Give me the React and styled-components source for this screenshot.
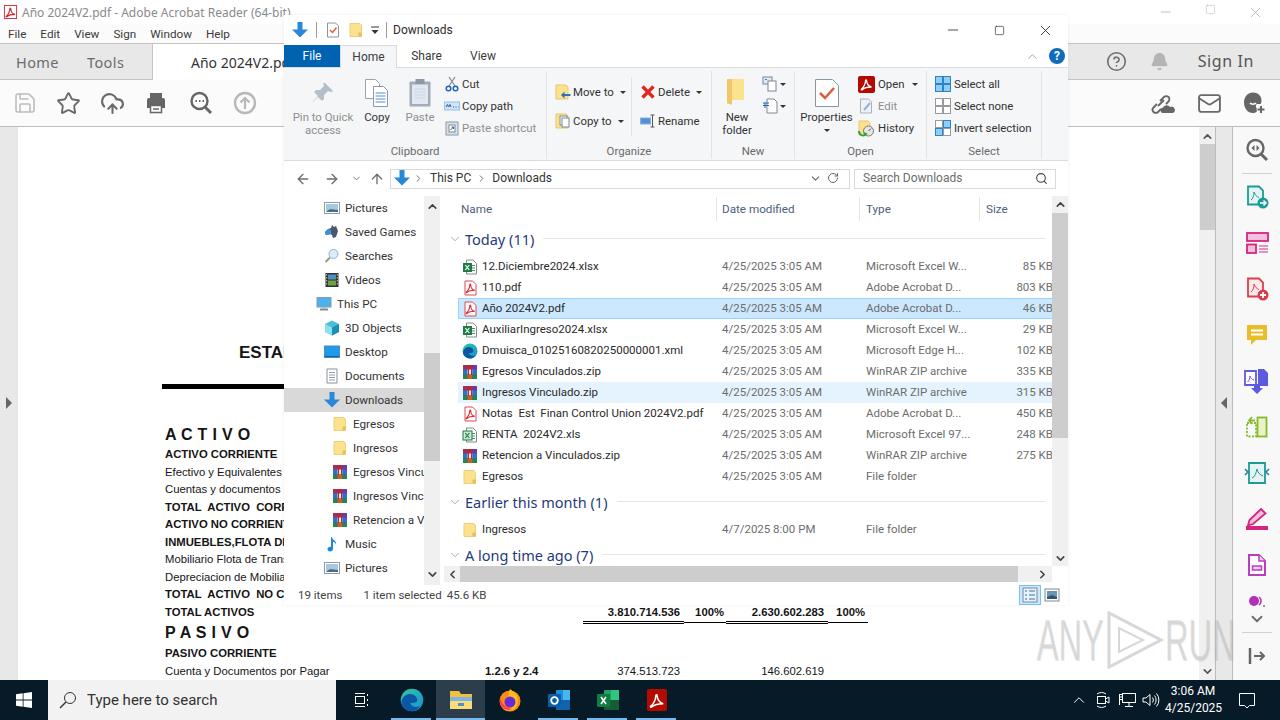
import React from "react";
import styled, { createGlobalStyle } from "styled-components";
import {
  ArrowLeft,
  ArrowRight,
  ArrowUp,
  Bell,
  ChevronDown,
  ChevronLeft,
  ChevronRight,
  ChevronUp,
  CircleHelp,
  CloudUpload,
  Mail,
  Minus,
  RotateCw,
  Save,
  Search,
  Square,
  Star,
  X,
} from "lucide-react";

const UI_FONT = `Roboto, "Noto Sans", sans-serif`;
const NOTO = `"Noto Sans", "Open Sans", sans-serif`;
const DOC_FONT = `"Liberation Sans", Arial, sans-serif`;

const GlobalStyle = createGlobalStyle`
  html, body { margin: 0; padding: 0; background: #fff; }
  body { font-family: ${UI_FONT}; overflow: hidden; }
  * { box-sizing: border-box; }
`;

const Screen = styled.div`
  position: relative;
  width: 1280px;
  height: 720px;
  overflow: hidden;
  display: flex;
  flex-direction: column;
`;

const Gap = styled.span`
  width: ${(p) => p.$w}px;
  flex: none;
`;

/* ---------- acrobat window ---------- */

const Acrobat = styled.div`
  flex: 1;
  min-height: 0;
  display: flex;
  flex-direction: column;
  background: #fff;
`;

const AcroTitle = styled.div`
  height: 24px;
  display: flex;
  align-items: center;
  padding-left: 3px;
  gap: 4px;
  font-family: ${NOTO};
  font-size: 12px;
  color: #8a8a8a;
  background: #fff;
`;

const AcroWinButtons = styled.div`
  margin-left: auto;
  display: flex;
  color: #a8a8a8;
  padding-right: 2px;
  span {
    width: 45px;
    display: flex;
    justify-content: center;
  }
`;

const AcroMenu = styled.div`
  height: 19px;
  display: flex;
  align-items: center;
  padding-left: 8px;
  gap: 14px;
  font-size: 11.7px;
  color: #3a3a3a;
  background: #fbfbfb;
`;

const AcroTabs = styled.div`
  height: 37px;
  display: flex;
  align-items: center;
  background: #e8e8e8;
  border-top: 1px solid #c4c4c4;
  border-bottom: 1px solid #c4c4c4;
`;

const HomeTab = styled.div`
  width: 71px;
  padding-left: 16px;
  font-family: ${NOTO};
  font-size: 14.5px;
  letter-spacing: 0.4px;
  color: #6c6c6c;
`;

const DocTab = styled.div`
  flex: 0 0 700px;
  margin-left: 10px;
  height: 36px;
  margin-bottom: -1px;
  display: flex;
  align-items: center;
  padding-left: 38px;
  background: #fff;
  border-left: 1px solid #c4c4c4;
  font-family: ${NOTO};
  font-size: 14px;
  color: #333;
  white-space: nowrap;
`;

const TabTools = styled.div`
  margin-left: auto;
  display: flex;
  align-items: center;
  color: #6e6e6e;
  padding-right: 26px;
  gap: 21px;
  svg:nth-child(2) {
    margin-left: 2px;
  }
`;

const SignIn = styled.span`
  font-family: ${NOTO};
  font-size: 16px;
  letter-spacing: 0.6px;
  color: #555;
  margin: -2px 0 0 8px;
`;

const AcroToolbar = styled.div`
  height: 47px;
  display: flex;
  align-items: center;
  padding-left: 13px;
  gap: 19px;
  background: #fbfbfb;
  border-bottom: 1px solid #bdbdbd;
  color: #6a6a6a;
  > :nth-child(5) {
    margin-left: 2px;
  }
  > :nth-child(6) {
    margin-left: 1px;
  }
`;

const ToolbarEnd = styled.div`
  margin-left: auto;
  display: flex;
  align-items: center;
  gap: 20px;
  padding-right: 14px;
  svg:first-child {
    margin-right: 2px;
  }
`;

const AcroBody = styled.div`
  flex: 1;
  min-height: 0;
  display: flex;
`;

const SidePane = styled.div`
  width: ${(p) => p.$w}px;
  flex: none;
  display: flex;
  align-items: center;
  justify-content: center;
  padding-bottom: 2px;
  background: #e8e8e8;
  ${(p) => p.$lined && "border-left: 1px solid #bcbcbc; border-right: 1px solid #bcbcbc;"}
`;

const PaneArrow = styled.i`
  width: 0;
  height: 0;
  border-top: 6px solid transparent;
  border-bottom: 6px solid transparent;
  ${(p) => (p.$left ? "border-right: 6px solid #666;" : "border-left: 6px solid #666;")}
`;

const Page = styled.div`
  flex: 1;
  min-width: 0;
  overflow: hidden;
  background: #fff;
  padding: 216px 0 0 147px;
  font-family: ${DOC_FONT};
  color: #151515;
`;

const DocTitle = styled.div`
  height: 20px;
  margin-left: 74px;
  font-size: 17px;
  font-weight: 700;
  line-height: 20px;
  white-space: nowrap;
`;

const DocRule = styled.div`
  width: 706px;
  height: 5px;
  margin: 21px 0 35px -3px;
  background: #000;
`;

const Heading = styled.div`
  height: ${(p) => p.$h}px;
  line-height: ${(p) => p.$h}px;
  font-size: 16px;
  font-weight: 700;
  letter-spacing: 0.3px;
  white-space: pre;
`;

const DocRow = styled.div`
  height: 17.5px;
  display: grid;
  grid-template-columns: 315px 103px 101px 42px 102px 40px;
  grid-template-rows: 17.5px;
  align-items: start;
  font-size: 11.3px;
  line-height: 17.5px;
  font-weight: ${(p) => (p.$bold ? 700 : 400)};
  white-space: pre;
`;

const NoteCell = styled.div`
  font-weight: 700;
  padding-left: 5px;
`;

const Num = styled.div`
  text-align: right;
  padding-right: ${(p) => p.$pr || 4}px;
  ${(p) => p.$under === "double" && "height: 20px; border-bottom: 3px double #000;"}
  ${(p) => p.$under === "single" && "height: 19px; border-bottom: 1px solid #000;"}
`;

const DocScroll = styled.div`
  width: 16px;
  flex: none;
  display: flex;
  flex-direction: column;
  align-items: center;
  background: #f0f0f0;
  color: #555;
`;

const DocThumb = styled.div`
  width: 15px;
  height: 86px;
  background: #cdcdcd;
`;

const DocUp = styled(ChevronUp)`
  margin: 3px 0 1px;
`;

const DocDown = styled(ChevronDown)`
  margin: auto 0 2px;
`;

const ToolStrip = styled.div`
  width: 47px;
  flex: none;
  display: flex;
  flex-direction: column;
  align-items: center;
  padding-top: 11px;
  background: #f8f8f8;
  color: #6a6a6a;
`;

const StripRule = styled.div`
  width: 30px;
  height: 1px;
  flex: none;
  background: #d0d0d0;
  margin: ${(p) => p.$m};
`;

const StripTool = styled.div`
  height: ${(p) => p.$h || 46}px;
  flex: none;
  display: flex;
  align-items: center;
  justify-content: center;
`;

const StripMore = styled(ChevronDown)`
  flex: none;
  margin-top: -6px;
`;

/* ---------- explorer window ---------- */

const Explorer = styled.div`
  position: absolute;
  left: 284px;
  top: 15px;
  width: 784px;
  height: 590px;
  display: flex;
  flex-direction: column;
  background: #fff;
  box-shadow: 0 0 3px rgba(0, 0, 0, 0.08);
  font-size: 12px;
  color: #2c2c2c;
`;

const TitleBar = styled.div`
  height: 30px;
  flex: none;
  display: flex;
  align-items: center;
  padding-left: 8px;
`;

const TitleSep = styled.i`
  width: 1px;
  height: 16px;
  background: #9a9a9a;
  margin: 0 ${(p) => p.$m || 8}px;
`;

const WinButtons = styled.div`
  margin-left: auto;
  display: flex;
  color: #222;
`;

const WinButton = styled.div`
  width: 46px;
  display: flex;
  justify-content: center;
  align-items: center;
`;

const TabRow = styled.div`
  height: 23px;
  flex: none;
  display: flex;
  align-items: stretch;
  border-bottom: 1px solid #dadbdc;
`;

const FileTab = styled.div`
  width: 56px;
  display: flex;
  align-items: center;
  justify-content: center;
  background: #0063b1;
  color: #fff;
`;

const RibbonTab = styled.div`
  width: ${(p) => p.$w}px;
  display: flex;
  align-items: center;
  justify-content: center;
  color: #3a3a3a;
  ${(p) =>
    p.$active &&
    `background: #f5f6f7;
     border: 1px solid #dadbdc;
     border-bottom: none;
     margin-bottom: -1px;`}
`;

const TabEnd = styled.div`
  margin-left: auto;
  display: flex;
  align-items: center;
  gap: 9px;
  padding-right: 3px;
  color: #a9a9a9;
`;

const HelpDot = styled.div`
  width: 16px;
  height: 16px;
  border-radius: 50%;
  background: #0f6cbd;
  color: #fff;
  font-size: 12px;
  font-weight: 700;
  line-height: 16px;
  text-align: center;
`;

const Ribbon = styled.div`
  height: 93px;
  flex: none;
  display: flex;
  background: #f5f6f7;
  border-bottom: 1px solid #dadbdc;
  font-size: 11.4px;
`;

const Group = styled.div`
  width: ${(p) => p.$w}px;
  flex: none;
  display: flex;
  flex-direction: column;
  border-right: 1px solid #e2e3e4;
  margin: 3px 0 1px;
`;

const GroupBody = styled.div`
  height: 72px;
  flex: none;
  display: flex;
  padding-left: ${(p) => p.$pl || 0}px;
`;

const GroupLabel = styled.div`
  height: 16px;
  flex: none;
  line-height: 16px;
  text-align: center;
  color: #6a6a6a;
`;

const LargeButton = styled.div`
  width: ${(p) => p.$w}px;
  flex: none;
  display: flex;
  flex-direction: column;
  align-items: center;
  padding-top: 7px;
  line-height: 13px;
  text-align: center;
  color: ${(p) => (p.$off ? "#8f8f8f" : "#333")};
  svg {
    margin-bottom: 3px;
    flex: none;
  }
`;

const SmallStack = styled.div`
  flex: none;
  display: flex;
  flex-direction: column;
  padding-top: 2px;
`;

const TallStack = styled.div`
  width: ${(p) => (p.$w ? `${p.$w}px` : "auto")};
  height: 59px;
  margin-top: 6px;
  flex: none;
  display: flex;
  flex-direction: column;
  ${(p) => p.$lined && "border-right: 1px solid #e2e3e4; margin-right: 8px;"}
`;

const SmallButton = styled.div`
  height: ${(p) => p.$h || 22}px;
  display: flex;
  align-items: center;
  gap: ${(p) => p.$gap || 3}px;
  white-space: nowrap;
  color: ${(p) => (p.$off ? "#8f8f8f" : "#333")};
  svg {
    flex: none;
  }
`;

const IconSlot = styled.span`
  width: 17px;
  display: flex;
  flex: none;
`;

const Caret = styled.i`
  width: 0;
  height: 0;
  margin: ${(p) => p.$mt ?? 1}px 0 0 ${(p) => p.$m ?? 4}px;
  border-left: 3px solid transparent;
  border-right: 3px solid transparent;
  border-top: 3px solid #333;
`;

const AddressRow = styled.div`
  height: 35px;
  flex: none;
  display: flex;
  align-items: center;
  padding-left: 7px;
  color: #6d6d6d;
`;

const NavButton = styled.div`
  width: ${(p) => p.$w}px;
  margin-right: ${(p) => p.$mr || 0}px;
  display: flex;
  justify-content: center;
`;

const AddressBox = styled.div`
  width: 460px;
  height: 20px;
  display: flex;
  align-items: center;
  padding: 0 0 1px 3px;
  border: 1px solid #d9d9d9;
  color: #333;
`;

const CrumbArrow = styled(ChevronRight)`
  margin: 0 ${(p) => p.$r}px 0 ${(p) => p.$l}px;
  color: #666;
  flex: none;
`;

const AddressEnd = styled.div`
  margin-left: auto;
  display: flex;
  align-items: center;
  gap: 5px;
  padding-right: 10px;
  color: #666;
`;

const SearchBox = styled.div`
  width: 202px;
  height: 20px;
  margin-left: 4px;
  display: flex;
  align-items: center;
  justify-content: space-between;
  padding: 0 7px 1px 8px;
  border: 1px solid #d9d9d9;
  color: #6d6d6d;
`;

const MainArea = styled.div`
  flex: 1;
  min-height: 0;
  display: flex;
`;

const NavPane = styled.div`
  width: 140px;
  flex: none;
  overflow: hidden;
`;

const NavRow = styled.div`
  height: 24px;
  display: flex;
  align-items: center;
  gap: 5px;
  padding-left: ${(p) => p.$pl}px;
  font-size: 11.7px;
  white-space: nowrap;
  color: #333;
  background: ${(p) => (p.$active ? "#d9d9d9" : "transparent")};
  svg {
    flex: none;
  }
`;

const ScrollBar = styled.div`
  width: 16px;
  flex: none;
  display: flex;
  flex-direction: column;
  justify-content: space-between;
  align-items: center;
  padding: ${(p) => p.$top}px 0 ${(p) => p.$bottom}px;
  position: relative;
  background: #f0f0f0;
  color: #444;
`;

const ScrollThumb = styled.div`
  position: absolute;
  left: 0;
  width: 16px;
  top: ${(p) => p.$top}px;
  height: ${(p) => p.$h}px;
  background: #cdcdcd;
`;

const FilePane = styled.div`
  flex: 1;
  min-width: 0;
  display: grid;
  grid-template-columns: 612px 16px;
  grid-template-rows: 370px 16px 3px;
`;

const FileList = styled.div`
  overflow: hidden;
  padding-left: 18px;
`;

const ColumnHeader = styled.div`
  height: 24px;
  display: grid;
  grid-template-columns: 258px 143px 120px 73px;
  margin-bottom: 8px;
  font-size: 11.7px;
`;

const ColumnCell = styled.div`
  padding-left: ${(p) => p.$pl || 5}px;
  margin-top: 1px;
  line-height: 24px;
  color: #4c607a;
  ${(p) => !p.$first && "border-left: 1px solid #e5e5e5;"}
`;

const GroupHead = styled.div`
  height: 24px;
  margin: ${(p) => p.$mt || 0}px 0 4px -10px;
  display: flex;
  align-items: center;
  padding-bottom: 3px;
  font-family: ${NOTO};
  font-size: 14.5px;
  color: #1f3a7d;
  white-space: nowrap;
  gap: 3px;
  &::after {
    content: "";
    flex: 1;
    height: 1px;
    background: #e5e5e5;
    margin: 0 7px 0 6px;
  }
  svg {
    color: #8a9ab0;
    flex: none;
  }
`;

const FileRow = styled.div`
  height: 21px;
  display: grid;
  grid-template-columns: 264px 144px 100px 86px;
  align-items: center;
  font-size: 11.5px;
  line-height: 19px;
  white-space: pre;
  border: 1px solid ${(p) => (p.$sel ? "#99d1ff" : "transparent")};
  background: ${(p) => (p.$sel ? "#cce8ff" : p.$hot ? "#e5f3ff" : "transparent")};
  margin-right: -1px;
`;

const NameCell = styled.div`
  display: flex;
  align-items: center;
  gap: 4px;
  padding-left: 3px;
  color: #2a2a2a;
  overflow: hidden;
`;

const InfoCell = styled.div`
  color: #6d6d6d;
  margin-left: -1px;
  text-align: ${(p) => (p.$right ? "right" : "left")};
`;

const HScroll = styled.div`
  margin-left: 4px;
  display: flex;
  align-items: center;
  justify-content: space-between;
  background: #f0f0f0;
  color: #444;
  position: relative;
  padding: 0 3px 0 2px;
`;

const HThumb = styled.div`
  position: absolute;
  left: 16px;
  top: 0;
  bottom: 0;
  width: 558px;
  background: #cdcdcd;
`;

const StatusBar = styled.div`
  height: 20px;
  flex: none;
  display: flex;
  align-items: center;
  padding-left: 14px;
  font-size: 11.5px;
  color: #444;
  white-space: nowrap;
`;

const StatusItem = styled.span`
  margin-right: ${(p) => p.$mr}px;
`;

const ViewButtons = styled.div`
  margin-left: auto;
  display: flex;
  align-items: center;
  padding-right: 5px;
`;

const ViewButton = styled.div`
  width: 22px;
  height: 20px;
  display: flex;
  align-items: center;
  justify-content: center;
  ${(p) => p.$on && "background: #cce8ff; border: 1px solid #7ac1f0;"}
`;

/* ---------- taskbar ---------- */

const Taskbar = styled.div`
  height: 40px;
  flex: none;
  display: flex;
  align-items: stretch;
  background: #071a28;
  color: #fff;
`;

const StartButton = styled.div`
  width: 48px;
  display: flex;
  align-items: center;
  justify-content: center;
`;

const SearchField = styled.div`
  width: 288px;
  display: flex;
  align-items: center;
  gap: 10px;
  padding-left: 11px;
  background: #f2f2f2;
  color: #333;
  font-size: 15px;
`;

const TaskButton = styled.div`
  width: 49px;
  display: flex;
  align-items: center;
  justify-content: center;
  position: relative;
  background: ${(p) => (p.$active ? "#2c3d4b" : "transparent")};
  ${(p) =>
    p.$open &&
    `&::after {
      content: "";
      position: absolute;
      bottom: 0;
      height: 2px;
      left: ${p.$active ? 0 : 4}px;
      right: ${p.$active ? 0 : 5}px;
      background: #76b9ed;
    }`}
`;

const Tray = styled.div`
  margin-left: auto;
  display: flex;
  align-items: center;
  padding-right: 21px;
`;

const TrayIcon = styled.div`
  width: 24px;
  display: flex;
  justify-content: center;
`;

const Clock = styled.div`
  width: 56px;
  margin: 0 14px 0 2px;
  text-align: center;
  font-size: 12px;
  line-height: 17px;
`;

const Watermark = styled.div`
  position: absolute;
  left: 1036px;
  top: 608px;
  width: 198px;
  height: 64px;
  display: flex;
  align-items: center;
  justify-content: space-between;
  color: rgba(190, 190, 190, 0.38);
  font-family: ${DOC_FONT};
  font-size: 44px;
  text-shadow: 1px 1px 0 rgba(150, 150, 150, 0.22);
  pointer-events: none;
`;

const MarkText = styled.span`
  width: 68px;
  display: flex;
  justify-content: center;
  transform: scale(0.74, 1.3);
`;

/* ---------- icons ---------- */

const Svg = ({ s = 16, w, h, vb, children }) => (
  <svg width={w || s} height={h || s} viewBox={vb || `0 0 ${s} ${s}`}>
    {children}
  </svg>
);

const Squiggle = ({ color = "#dc2a30", k = 1, x = 0, y = 0, sw = 1.3 }) => (
  <path
    transform={`translate(${x} ${y}) scale(${k})`}
    d="M1 10.500C3 9.500 5 5 5 2.500 5 1 6.200 1 6.200 2.500 6.200 5 8 8 11 8.500 8.500 8.500 4 9 2 11 1 12 .5 11 1 10.500Z"
    fill="none"
    stroke={color}
    strokeWidth={sw}
  />
);

const PdfIcon = () => (
  <Svg>
    <path d="M3 1h7.500L14 4.500V15H3Z" fill="#fff" stroke="#e0474c" />
    <Squiggle x={3.500} y={3} k={0.85} />
  </Svg>
);

const ExcelIcon = ({ old }) => (
  <Svg>
    <path d="M4.500 1H11l3.500 3.500V15h-10Z" fill="#fff" stroke="#7f8c87" />
    <path d="M10 6.500h3M10 9h3M10 11.500h3" stroke="#4d8f6c" />
    <rect x="1" y="4" width="9" height="9" fill={old ? "#c9e9d3" : "#1d7c45"} stroke={old ? "#1d7c45" : "none"} />
    <path d="M3.300 6l4 5M7.300 6l-4 5" stroke={old ? "#1d7c45" : "#fff"} strokeWidth="1.200" />
  </Svg>
);

const RarIcon = () => (
  <Svg>
    <rect x="1" y="1" width="14" height="14" fill="#5b3a9c" />
    <rect x="1" y="1" width="4.500" height="4.500" fill="#a5304f" />
    <rect x="5.500" y="1" width="5" height="4.500" fill="#b5293f" />
    <rect x="10.500" y="1" width="4.500" height="4.500" fill="#6d3aa5" />
    <rect x="1" y="5.500" width="4.500" height="5" fill="#2f6fd0" />
    <rect x="5.500" y="5.500" width="5" height="5" fill="#f4ead0" />
    <rect x="10.500" y="5.500" width="4.500" height="5" fill="#2f6fd0" />
    <rect x="1" y="10.500" width="4.500" height="4.500" fill="#1e8a4a" />
    <rect x="5.500" y="10.500" width="5" height="4.500" fill="#cf5b2b" />
    <rect x="10.500" y="10.500" width="4.500" height="4.500" fill="#1e8a4a" />
    <path d="M6.500 5v6M9.500 5v6" stroke="#b5293f" strokeWidth="1" />
  </Svg>
);

const EdgeIcon = ({ s = 16 }) => (
  <svg width={s} height={s} viewBox="0 0 16 16">
    <defs>
      <linearGradient id="edgeG" x1="0" y1="0" x2="1" y2="1">
        <stop offset="0" stopColor="#2ecb9b" />
        <stop offset="1" stopColor="#1a8fd8" />
      </linearGradient>
    </defs>
    <circle cx="8" cy="8" r="7.500" fill="url(#edgeG)" />
    <path d="M1 9c.5-3 3-5 5.500-5 3 0 5 2 5 4.200 0 1.200-1.500 1.800-3 1.800-1 0-1.500-.3-1.500-.3 0 2 2 3 4 3 1 0 2-.4 2.500-.8C12 14.500 10 15.500 8 15.500 4 15.500 1 12.500 1 9Z" fill="#0c57a5" />
  </svg>
);

const FolderIcon = ({ s = 16 }) => (
  <svg width={s} height={s} viewBox="0 0 16 16">
    <path d="M2 1.500h10l1.500 2v11H2Z" fill="#fde28e" stroke="#eccf7c" />
    <path d="M10.500 14.500v-4h3v4Z" fill="#e9bd55" />
  </svg>
);

const DownArrowIcon = ({ s = 16 }) => (
  <svg width={s} height={s} viewBox="0 0 16 16">
    <path d="M5.500 0h5v7.500H16L8 15.500 0 7.500h5.500Z" fill="#2b87d8" />
  </svg>
);

const PicturesIcon = () => (
  <Svg>
    <rect x=".5" y="2.500" width="15" height="11" fill="#fff" stroke="#8a9aa8" />
    <rect x="2" y="4" width="12" height="8" fill="#a9c7dc" />
    <path d="M2 12l4-3 8 1v2Z" fill="#4a6d84" />
  </Svg>
);

const GamesIcon = () => (
  <Svg>
    <path d="M8 1l2 2 2-1 2 5-2 6-3 1-1-3-2-1-4 1-1-3 3-3 3-1Z" fill="#4a5a6a" />
    <path d="M1 8l3-3 3 1v4l-3 1-3-1Z" fill="#3f90dc" />
  </Svg>
);

const SearchesIcon = () => (
  <Svg>
    <circle cx="9.500" cy="6" r="4.500" fill="#dcecf8" stroke="#8fb2cc" />
    <path d="M6 9.500L1.500 14" stroke="#9a9a8a" strokeWidth="2" />
  </Svg>
);

const VideosIcon = () => (
  <Svg>
    <rect x="1.500" y="1" width="13" height="14" fill="#2e3136" />
    <rect x="4" y="2.500" width="8" height="5" fill="#4f8fc0" />
    <rect x="4" y="8.500" width="8" height="5" fill="#6fa13f" />
    <path d="M2.700 2v12M13.300 2v12" stroke="#d8c58a" strokeDasharray="1.500 1.500" />
  </Svg>
);

const PcIcon = () => (
  <Svg>
    <rect x="1" y="1.500" width="14" height="9.500" fill="#4cb1ee" stroke="#8a9aa8" />
    <path d="M4 13.500h8" stroke="#7a8a98" strokeWidth="2" />
    <path d="M6 11h4v2H6Z" fill="#b0bcc6" />
  </Svg>
);

const ObjectsIcon = () => (
  <Svg>
    <path d="M8 .5l7 3.500v8l-7 3.500-7-3.500V4Z" fill="#49c0d8" />
    <path d="M8 7.500l7-3.500v8l-7 3.500Z" fill="#1a90b4" />
    <path d="M8 7.500L1 4v8l7 3.500Z" fill="#8de0ea" />
  </Svg>
);

const DesktopIcon = () => (
  <Svg>
    <rect x=".5" y="2" width="15" height="11.500" fill="#1f9ae8" stroke="#4d8cba" />
    <path d="M1 12.500h14" stroke="#0e5f9c" />
  </Svg>
);

const DocumentsIcon = () => (
  <Svg>
    <path d="M3 1h10v14H3Z" fill="#fff" stroke="#8a8f98" />
    <path d="M5 4.500h6M5 7h6M5 9.500h6M5 12h6" stroke="#8ca0b8" />
  </Svg>
);

const MusicIcon = () => (
  <Svg>
    <path d="M8 1c0 3 5 3.500 4 7.500-.5-2-2-2.500-3-2.700V13c0 1.500-1.500 2.500-3 2.500S3.500 14.500 3.500 13 5 10.500 7 10.800V1Z" fill="#1e88d8" />
  </Svg>
);

const PinIcon = () => (
  <svg width="26" height="30" viewBox="0 -2 26 30">
    <path d="M15 3l8 8-2 1-3-1-4 4 0 4-2 2-4-4-6 6 6-7-4-4 2-2 4 0 4-4-1-3Z" fill="#b4bfc9" />
  </svg>
);

const CopyLarge = () => (
  <svg width="26" height="30" viewBox="0 0 26 30">
    <path d="M1.500 1.500h10l4 4v15h-14Z" fill="#fff" stroke="#9aa3ad" />
    <path d="M9.500 8.500h10l4 4v16h-14Z" fill="#fff" stroke="#8c99a8" />
    <path d="M11.500 15h10M11.500 18h10M11.500 21h10M11.500 24h10" stroke="#4f8fd4" />
  </svg>
);

const PasteLarge = () => (
  <svg width="24" height="30" viewBox="0 0 24 30">
    <rect x="1.500" y="3.500" width="21" height="25" rx="1" fill="#a3acb7" />
    <rect x="4" y="6.500" width="16" height="19.500" fill="#dfe8f3" />
    <rect x="7.500" y="1" width="9" height="5" fill="#8f99a5" />
    <path d="M6.500 11h11M6.500 14h11M6.500 17h11M6.500 20h11" stroke="#c8d5e5" />
  </svg>
);

const CutIcon = () => (
  <Svg>
    <path d="M5 10L11 1M11 10L5 1" stroke="#8a8f96" strokeWidth="1.300" />
    <circle cx="4.500" cy="12.500" r="2.300" fill="none" stroke="#1f66b8" strokeWidth="1.500" />
    <circle cx="11.500" cy="12.500" r="2.300" fill="none" stroke="#1f66b8" strokeWidth="1.500" />
  </Svg>
);

const CopyPathIcon = () => (
  <Svg>
    <rect x=".5" y="4" width="15" height="8" fill="#cfe4f7" stroke="#9dbfe0" />
    <path d="M2 9l1.500-2.500 1 2.500 1.500-2.500 1 2.500M9 9h1M11.500 9h1M14 9h.5" fill="none" stroke="#2a5fa0" />
  </Svg>
);

const ShortcutIcon = () => (
  <Svg>
    <rect x="2" y="2" width="12" height="13" fill="#d6e1ee" stroke="#8e98a4" />
    <rect x="5" y="5" width="6" height="7" fill="#fff" stroke="#7a8a9a" />
    <path d="M6.500 10l3-3M7.500 7h2v2" fill="none" stroke="#556" />
  </Svg>
);

const MoveToIcon = () => (
  <Svg>
    <path d="M1 1h10l2 2v12H1Z" fill="#fde28e" stroke="#e6c76c" />
    <path d="M15.500 10h-6V7.500L6 11l3.500 3.500V12h6Z" fill="#2f6fb8" />
  </Svg>
);

const CopyToIcon = () => (
  <Svg>
    <path d="M1 1h10l2 2v12H1Z" fill="#fde28e" stroke="#e6c76c" />
    <rect x="5" y="3" width="7" height="9" fill="#fff" stroke="#7c8a98" />
    <rect x="7" y="5" width="7" height="9" fill="#fff" stroke="#7c8a98" />
  </Svg>
);

const DeleteIcon = () => (
  <Svg>
    <path d="M2.500 2.500l11 11M13.500 2.500l-11 11" stroke="#e2241e" strokeWidth="3.200" />
  </Svg>
);

const RenameIcon = () => (
  <Svg>
    <rect x=".5" y="5" width="10" height="6" fill="#4d91d8" stroke="#8ab0d4" />
    <path d="M12.500 2v12M10.500 2h4M10.500 14h4" stroke="#555" />
  </Svg>
);

const NewFolderLarge = () => (
  <svg width="30" height="30" viewBox="0 0 30 30">
    <path d="M5 1h17v21H10l-5 5Z" fill="#fde28e" />
    <path d="M5 1h5v26l-5-2Z" fill="#f1c867" />
  </svg>
);

const NewItemIcon = () => (
  <svg width="18" height="16" viewBox="0 0 18 16">
    <rect x="1" y="1" width="9" height="7" fill="#dfeaf5" stroke="#7b8896" />
    <rect x="6" y="5" width="8" height="10" fill="#fff" stroke="#7b8896" />
    <path d="M3 3.500h2" stroke="#2b87d8" />
  </svg>
);

const EasyAccessIcon = () => (
  <svg width="18" height="16" viewBox="0 0 18 16">
    <path d="M5 1h7l3 3v11H5Z" fill="#fff" stroke="#7b8896" />
    <path d="M1 5h6M1 7.500h6M3 5v5" stroke="#1f66b8" />
  </svg>
);

const PropertiesLarge = () => (
  <svg width="26" height="30" viewBox="0 0 26 30">
    <path d="M1.500 1.500h17l6 6v21h-23Z" fill="#fff" stroke="#8c949c" />
    <path d="M6 15l5 5 9-10" fill="none" stroke="#d9603a" strokeWidth="2.500" />
  </svg>
);

const AcroTile = () => (
  <svg width="17" height="17" viewBox="0 0 17 17">
    <rect width="17" height="17" rx="2" fill="#b30b00" />
    <Squiggle color="#fff" x={2.500} y={2.500} sw={1.300} />
  </svg>
);

const EditIcon = () => (
  <Svg>
    <path d="M2.500 1h8l3 3v11h-11Z" fill="#eef2f6" stroke="#a9b2bb" />
    <path d="M6 12l6-7" stroke="#93b4d6" strokeWidth="2" />
  </Svg>
);

const HistoryIcon = () => (
  <svg width="17" height="17" viewBox="0 0 17 17">
    <path d="M1 1h9l2 2v10H1Z" fill="#fde28e" stroke="#e6c76c" />
    <circle cx="10.500" cy="11" r="5" fill="#e6e6e6" stroke="#7a7a7a" />
    <path d="M10.500 11l2.500-2.500" stroke="#555" />
    <path d="M1 11a4 4 0 0 0 7 3l-2-1" fill="none" stroke="#39a52c" strokeWidth="2" />
  </svg>
);

const SelectTile = ({ cells }) => (
  <Svg>
    {[
      [0.5, 0.5],
      [8.5, 0.5],
      [0.5, 8.5],
      [8.5, 8.5],
    ].map(([x, y], i) => (
      <rect key={i} x={x} y={y} width="7" height="7" fill={cells[i] ? "#8fcdf5" : "#fff"} stroke={cells[i] ? "#2c84c8" : "#9a9a9a"} />
    ))}
  </Svg>
);

const QuickCheckIcon = () => (
  <Svg>
    <path d="M2.500 1h8l3 3v11h-11Z" fill="#fff" stroke="#8c949c" />
    <path d="M5 8l2.500 2.500 4-5" fill="none" stroke="#d9603a" strokeWidth="1.500" />
  </Svg>
);

const QuickCaret = () => (
  <svg width="10" height="10" viewBox="0 0 10 10">
    <path d="M1 2h8" stroke="#333" />
    <path d="M1.500 5h7L5 9Z" fill="#333" />
  </svg>
);

const DetailsView = () => (
  <Svg>
    <rect x="1" y="1" width="14" height="14" fill="#e6f3fc" stroke="#7a8a98" />
    <path d="M3 4h2M7 4h6M3 8h2M7 8h6M3 12h2M7 12h6" stroke="#3d6fa8" />
  </Svg>
);

const ThumbView = () => (
  <Svg>
    <rect x="1" y="2" width="14" height="12" fill="#fff" stroke="#7a8a98" />
    <rect x="3" y="4" width="10" height="8" fill="#6b93b3" />
    <path d="M3 10l5-2 5 2v2H3Z" fill="#2f5570" />
  </Svg>
);

const AcroDocIcon = () => (
  <Svg w={15} h={16} vb="0 0 16 16">
    <rect x="1.500" y="1" width="13" height="14" fill="#fff" stroke="#c8323a" />
    <Squiggle x={2.500} y={2.500} k={0.95} color="#d4282e" />
  </Svg>
);

const PrinterIcon = () => (
  <svg width="24" height="24" viewBox="0 0 24 24">
    <rect x="6" y="2" width="12" height="5" fill="#666" />
    <path d="M3 9a2 2 0 0 1 2-2h14a2 2 0 0 1 2 2v8h-3v-3H6v3H3Z" fill="#666" />
    <rect x="6.500" y="14.500" width="11" height="7" fill="#fff" stroke="#666" strokeWidth="1.500" />
    <path d="M9 18h6" stroke="#666" strokeWidth="1.500" />
  </svg>
);

const MagnifyDots = ({ arrows }) => (
  <svg width="24" height="24" viewBox="0 0 24 24">
    <circle cx="10.500" cy="10" r="8" fill="none" stroke="#666" strokeWidth="2.400" />
    <path d="M16 16l6 6" stroke="#666" strokeWidth="3" />
    {arrows ? (
      <path d="M9.500 7v6l-3-3ZM11.500 7v6l3-3Z" fill="#666" />
    ) : (
      <path d="M6.500 10h1.500M10 10h1.500M13.500 10H15" stroke="#666" strokeWidth="1.800" />
    )}
  </svg>
);

const UpCircle = () => (
  <svg width="24" height="24" viewBox="0 0 24 24">
    <circle cx="12" cy="12" r="10" fill="none" stroke="#b8b8b8" strokeWidth="2.400" />
    <path d="M12 18V7M7.500 11.500L12 7l4.500 4.500" fill="none" stroke="#b8b8b8" strokeWidth="2.200" />
  </svg>
);

const LinkCloud = () => (
  <svg width="26" height="24" viewBox="0 0 26 24">
    <path d="M8 13l-3.500 3.500a3 3 0 0 0 4.500 4.500L12 18M11 10l4-4a3 3 0 0 1 4.500 4.500L17 13M9 15l6-6" fill="none" stroke="#666" strokeWidth="1.800" />
    <path d="M13 22a3 3 0 0 1 1-5.500 4 4 0 0 1 7-.5 3 3 0 0 1 3 6Z" fill="#666" />
  </svg>
);

const UserPlus = () => (
  <svg width="24" height="24" viewBox="0 0 24 24">
    <path d="M11 1.500c5 0 8.500 3.500 8.500 8 0 1.500-.3 2.500-.8 3.500h-4c-1 1-1.200 3 0 4.500v3.500c-1 .5-2.500 1-3.700 1C5.500 22 2 17 2 11.500 2 5.500 6 1.500 11 1.500Z" fill="#666" />
    <path d="M8 12c1 1.500 5 1.500 6 0" stroke="#fff" strokeWidth="1.500" fill="none" />
    <path d="M19 15v7M15.500 18.500h7" stroke="#666" strokeWidth="2" />
  </svg>
);

const ExportTool = () => (
  <svg width="24" height="24" viewBox="0 0 24 24">
    <path d="M3 1.500h11l4 4v8l-5 6H3Z" fill="#e6f3f3" stroke="#1d9a94" strokeWidth="1.800" />
    <path d="M6 15c2-1 3-5 3-8 1 3 3 5 5 5.500" fill="none" stroke="#1d9a94" />
    <circle cx="18" cy="18" r="5.500" fill="#1d9a94" />
    <path d="M15 18h6M18.500 15.500L21 18l-2.500 2.500" fill="none" stroke="#fff" strokeWidth="1.500" />
  </svg>
);

const EditLayoutTool = () => (
  <svg width="24" height="24" viewBox="0 0 24 24">
    <rect x="2" y="2" width="21" height="8" fill="#f4bedd" stroke="#d6257f" strokeWidth="1.800" />
    <rect x="2" y="13.500" width="9" height="8.500" fill="#f4bedd" stroke="#d6257f" strokeWidth="1.800" />
    <path d="M14 15h9M14 18h9M14 21h9" stroke="#d6257f" strokeWidth="1.200" />
  </svg>
);

const CreateTool = () => (
  <svg width="24" height="24" viewBox="0 0 24 24">
    <path d="M3 1.500h11l4 4v8l-5 6H3Z" fill="#fbeaea" stroke="#dc3d4b" strokeWidth="1.800" />
    <path d="M6 15c2-1 3-5 3-8 1 3 3 5 5 5.500" fill="none" stroke="#dc3d4b" />
    <circle cx="18" cy="18" r="5.500" fill="#dc3d4b" />
    <path d="M15 18h6M18 15v6" stroke="#fff" strokeWidth="1.800" />
  </svg>
);

const CommentTool = () => (
  <svg width="24" height="24" viewBox="0 0 24 24">
    <path d="M2 2h20v15H11l-5 5v-5H2Z" fill="#e8bd2a" />
    <path d="M6 7.500h12M6 11.500h12" stroke="#fff" strokeWidth="2" />
  </svg>
);

const OrganizeTool = () => (
  <svg width="26" height="26" viewBox="0 0 26 26">
    <path d="M1 3h11v14H1Z" fill="#fff" stroke="#5b5be0" strokeWidth="1.800" />
    <path d="M14 1h6l4 4v13H14Z" fill="#5b5be0" />
    <path d="M3.500 14c1.500-1 2.500-4 2.500-6 .5 2 2 3.500 4 4" fill="none" stroke="#5b5be0" />
    <path d="M10 16h6v4h3l-6 6-6-6h3Z" fill="#5b5be0" />
  </svg>
);

const CompressTool = () => (
  <svg width="24" height="24" viewBox="0 0 24 24">
    <rect x="12.500" y="2.500" width="9" height="19" fill="#e9f3c8" stroke="#87b92e" strokeWidth="1.800" />
    <rect x="2" y="8" width="9" height="13.500" fill="none" stroke="#87b92e" strokeWidth="1.800" strokeDasharray="2 1.500" />
    <path d="M4 5.500h6M7 2l-3 3.500L7 9" fill="none" stroke="#87b92e" strokeWidth="1.800" />
  </svg>
);

const ScanTool = () => (
  <svg width="26" height="24" viewBox="0 0 26 24">
    <path d="M5 2h16v20H5Z" fill="#e6f3f3" stroke="#1d9a94" strokeWidth="1.800" />
    <path d="M8 17c3-1 4-5 5-9 1 4 3 6 6 7" fill="none" stroke="#1d9a94" />
    <path d="M1 8l3 3-3 3M25 8l-3 3 3 3" fill="#fff" stroke="#1d7a94" strokeWidth="1.500" />
  </svg>
);

const SignTool = () => (
  <svg width="24" height="24" viewBox="0 0 24 24">
    <path d="M16 2l4.500 4.500L8 17l-5 1.500L4.500 13Z" fill="#f4bedd" stroke="#d6257f" strokeWidth="1.800" />
    <path d="M1 19h22v4H1Z" fill="#d6257f" />
  </svg>
);

const FillTool = () => (
  <svg width="24" height="24" viewBox="0 0 24 24">
    <path d="M4 2h10l6 6v14H4Z" fill="#fff" stroke="#b93cc2" strokeWidth="2" />
    <path d="M14 2v6h6" fill="#f0d0f2" stroke="#b93cc2" strokeWidth="1.500" />
    <rect x="7.500" y="13" width="9" height="4" fill="#f0d0f2" stroke="#b93cc2" strokeWidth="1.500" />
  </svg>
);

const StampTool = () => (
  <svg width="24" height="14" viewBox="0 0 24 14">
    <circle cx="9" cy="6" r="5" fill="#b030b8" />
    <path d="M14 2a5 5 0 0 1 0 8" fill="none" stroke="#b030b8" strokeWidth="1.500" />
    <circle cx="19" cy="11" r="1" fill="#777" />
  </svg>
);

const CollapseTool = () => (
  <svg width="20" height="20" viewBox="0 0 20 20">
    <path d="M3 2v16" stroke="#666" strokeWidth="2.500" />
    <path d="M7 10h10M13 6l4 4-4 4" fill="none" stroke="#666" strokeWidth="2" />
  </svg>
);

const WinLogo = () => (
  <svg width="16" height="16" viewBox="0 0 16 16">
    <path d="M0 2.200l6.700-.9v6.300H0ZM7.500 1.200L16 0v7.600H7.500ZM0 8.400h6.700v6.300L0 13.800ZM7.500 8.400H16V16l-8.500-1.200Z" fill="#fff" />
  </svg>
);

const TaskSearchIcon = () => (
  <svg width="18" height="20" viewBox="0 0 18 20" fill="none" stroke="#333">
    <circle cx="11" cy="8" r="5.500" />
    <path d="M7 12l-6 6" strokeWidth="1.400" />
  </svg>
);

const TaskViewIcon = () => (
  <svg width="18" height="18" viewBox="0 0 18 18" fill="none" stroke="#fff">
    <rect x="3.500" y="5.500" width="9" height="7" />
    <path d="M3 2.500h10M3 15.500h10M15.500 3v2M15.500 8v2M15.500 13v2" />
  </svg>
);

const ExplorerTaskIcon = () => (
  <svg width="24" height="24" viewBox="0 0 24 24">
    <path d="M1 3h9l2 3h11v4H1Z" fill="#f1c040" />
    <path d="M1 9h22v12H1Z" fill="#fbdc7a" />
    <path d="M1 9h22v4H1Z" fill="#7cb4e4" />
    <rect x="9" y="15" width="6" height="3" fill="#4e8fc8" />
  </svg>
);

const FirefoxIcon = () => (
  <svg width="24" height="24" viewBox="0 0 24 24">
    <circle cx="12" cy="13" r="10.500" fill="#ff8a16" />
    <path d="M12 1c3 2 6 5 7 7 2 4 1 10-3 13-3 2-8 2-11 0 5 1 10-1 10-6 0-3-3-5-5-4 0-4 1-7 2-10Z" fill="#ffbe1a" />
    <circle cx="12" cy="14" r="5.500" fill="#6b2ad6" />
    <path d="M2 10c2 6 6 10 12 11-5 3-12-1-12-8Z" fill="#ff3f4e" />
  </svg>
);

const OutlookIcon = () => (
  <svg width="24" height="24" viewBox="0 0 24 24">
    <rect x="9" y="2" width="14" height="20" rx="1" fill="#1b8fdc" />
    <rect x="16" y="2" width="7" height="10" fill="#48b7ef" />
    <rect x="9" y="12" width="14" height="10" fill="#0f64ad" />
    <rect x="1" y="6" width="13" height="13" rx="1" fill="#0a5fa8" />
    <circle cx="7.500" cy="12.500" r="3.300" fill="none" stroke="#fff" strokeWidth="1.800" />
  </svg>
);

const ExcelTaskIcon = () => (
  <svg width="24" height="24" viewBox="0 0 24 24">
    <rect x="8" y="2" width="15" height="20" rx="1" fill="#21a366" />
    <rect x="15" y="2" width="8" height="10" fill="#33c481" />
    <rect x="8" y="12" width="15" height="10" fill="#185c37" />
    <rect x="1" y="6" width="13" height="13" rx="1" fill="#107c41" />
    <path d="M5 9l5 7M10 9l-5 7" stroke="#fff" strokeWidth="1.600" />
  </svg>
);

const AcroTaskIcon = () => (
  <svg width="22" height="24" viewBox="0 0 22 24">
    <rect x="1" y="1" width="20" height="22" rx="2" fill="#b30b00" />
    <Squiggle color="#fff" x={3.500} y={5} k={1.250} sw={1.200} />
  </svg>
);

const MeetIcon = () => (
  <svg width="18" height="18" viewBox="0 0 18 18" fill="none" stroke="#fff">
    <rect x="3.500" y="5.500" width="8" height="7" />
    <path d="M11.500 8l3.500-2v6l-3.500-2M3 3a8 8 0 0 1 9 0M3 15a8 8 0 0 0 9 0" />
  </svg>
);

const NetworkIcon = () => (
  <svg width="18" height="18" viewBox="0 0 18 18" fill="none" stroke="#fff">
    <rect x="4.500" y="2.500" width="13" height="9" />
    <path d="M11 12v3M7 15.500h8M1 3.500h4M1 6h4M1 8.500h4M1.500 3v11" />
  </svg>
);

const SpeakerIcon = () => (
  <svg width="20" height="18" viewBox="0 0 20 18" fill="none" stroke="#fff">
    <path d="M2 7v4h3l4 3.500v-11L5 7Z" />
    <path d="M11.500 6.500a4 4 0 0 1 0 5M13.500 4.500a7 7 0 0 1 0 9M15.500 2.500a10 10 0 0 1 0 13" />
  </svg>
);

const NotifyIcon = () => (
  <svg width="20" height="20" viewBox="0 0 20 20" fill="none" stroke="#fff">
    <path d="M2.500 3.500h15v12h-5L10 18l-2.500-2.500h-5Z" />
  </svg>
);

const PlayMark = () => (
  <svg width="60" height="60" viewBox="0 0 60 60" fill="none" stroke="rgba(175,175,175,.5)" strokeWidth="3">
    <path d="M4 3v54l52-27Z" />
    <path d="M14 18v24l24-12Z" strokeWidth="2" />
  </svg>
);

/* ---------- data ---------- */

const navItems = [
  { pl: 40, icon: <PicturesIcon />, label: "Pictures" },
  { pl: 40, icon: <GamesIcon />, label: "Saved Games" },
  { pl: 40, icon: <SearchesIcon />, label: "Searches" },
  { pl: 40, icon: <VideosIcon />, label: "Videos" },
  { pl: 32, icon: <PcIcon />, label: "This PC" },
  { pl: 40, icon: <ObjectsIcon />, label: "3D Objects" },
  { pl: 40, icon: <DesktopIcon />, label: "Desktop" },
  { pl: 40, icon: <DocumentsIcon />, label: "Documents" },
  { pl: 40, icon: <DownArrowIcon />, label: "Downloads", active: true },
  { pl: 48, icon: <FolderIcon />, label: "Egresos" },
  { pl: 48, icon: <FolderIcon />, label: "Ingresos" },
  { pl: 48, icon: <RarIcon />, label: "Egresos Vinculados.zip" },
  { pl: 48, icon: <RarIcon />, label: "Ingresos Vinculado.zip" },
  { pl: 48, icon: <RarIcon />, label: "Retencion a Vinculados.zip" },
  { pl: 40, icon: <MusicIcon />, label: "Music" },
  { pl: 40, icon: <PicturesIcon />, label: "Pictures" },
];

const DATE = "4/25/2025 3:05 AM";
const todayFiles = [
  { icon: <ExcelIcon />, name: "12.Diciembre2024.xlsx", type: "Microsoft Excel W...", size: "85 KB" },
  { icon: <PdfIcon />, name: "110.pdf", type: "Adobe Acrobat D...", size: "803 KB" },
  { icon: <PdfIcon />, name: "Año 2024V2.pdf", type: "Adobe Acrobat D...", size: "46 KB", sel: true },
  { icon: <ExcelIcon />, name: "AuxiliarIngreso2024.xlsx", type: "Microsoft Excel W...", size: "29 KB" },
  { icon: <EdgeIcon />, name: "Dmuisca_01025160820250000001.xml", type: "Microsoft Edge H...", size: "102 KB" },
  { icon: <RarIcon />, name: "Egresos Vinculados.zip", type: "WinRAR ZIP archive", size: "335 KB" },
  { icon: <RarIcon />, name: "Ingresos Vinculado.zip", type: "WinRAR ZIP archive", size: "315 KB", hot: true },
  { icon: <PdfIcon />, name: "Notas  Est  Finan Control Union 2024V2.pdf", type: "Adobe Acrobat D...", size: "450 KB" },
  { icon: <ExcelIcon old />, name: "RENTA  2024V2.xls", type: "Microsoft Excel 97...", size: "248 KB" },
  { icon: <RarIcon />, name: "Retencion a Vinculados.zip", type: "WinRAR ZIP archive", size: "275 KB" },
  { icon: <FolderIcon />, name: "Egresos", type: "File folder", size: "" },
];

const docRows = [
  { t: "ACTIVO CORRIENTE", b: true },
  { t: "Efectivo y Equivalentes al Efectivo" },
  { t: "Cuentas y documentos por Cobrar" },
  { t: "TOTAL  ACTIVO  CORRIENTE", b: true },
  { t: "ACTIVO NO CORRIENTE", b: true },
  { t: "INMUEBLES,FLOTA DE TRANSPORTE", b: true },
  { t: "Mobiliario Flota de Transporte" },
  { t: "Depreciacion de Mobiliario" },
  { t: "TOTAL  ACTIVO  NO CORRIENTE", b: true },
];

const FileLine = ({ icon, name, date = DATE, type, size, sel, hot }) => (
  <FileRow $sel={sel} $hot={hot}>
    <NameCell>
      {icon}
      {name}
    </NameCell>
    <InfoCell>{date}</InfoCell>
    <InfoCell>{type}</InfoCell>
    <InfoCell $right>{size}</InfoCell>
  </FileRow>
);

const App = () => (
  <Screen>
    <GlobalStyle />
    <Acrobat>
      <AcroTitle>
        <AcroDocIcon />
        Año 2024V2.pdf - Adobe Acrobat Reader (64-bit)
        <AcroWinButtons>
          <span><Minus size={16} strokeWidth={1} /></span>
          <span><Square size={11} strokeWidth={1} /></span>
          <span><X size={17} strokeWidth={1} /></span>
        </AcroWinButtons>
      </AcroTitle>
      <AcroMenu>
        <span>File</span>
        <span>Edit</span>
        <span>View</span>
        <span>Sign</span>
        <span>Window</span>
        <span>Help</span>
      </AcroMenu>
      <AcroTabs>
        <HomeTab>Home</HomeTab>
        <HomeTab>Tools</HomeTab>
        <DocTab>Año 2024V2.pdf</DocTab>
        <TabTools>
          <CircleHelp size={21} strokeWidth={1.8} />
          <Bell size={19} fill="#b4b4b4" stroke="#b4b4b4" />
          <SignIn>Sign In</SignIn>
        </TabTools>
      </AcroTabs>
      <AcroToolbar>
        <Save size={24} strokeWidth={1.6} color="#bdbdbd" />
        <Star size={25} strokeWidth={1.8} />
        <CloudUpload size={25} strokeWidth={2} />
        <PrinterIcon />
        <MagnifyDots />
        <UpCircle />
        <ToolbarEnd>
          <LinkCloud />
          <Mail size={25} strokeWidth={1.8} />
          <UserPlus />
        </ToolbarEnd>
      </AcroToolbar>
      <AcroBody>
        <SidePane $w={18}>
          <PaneArrow />
        </SidePane>
        <Page>
          <DocTitle>ESTADO DE SITUACION FINANCIERA</DocTitle>
          <DocRule />
          <Heading $h={22}>A C T I V O</Heading>
          {docRows.map((r) => (
            <DocRow key={r.t} $bold={r.b}>
              <div>{r.t}</div>
            </DocRow>
          ))}
          <DocRow $bold>
            <div>TOTAL ACTIVOS</div>
            <div />
            <Num $under="double">3.810.714.536</Num>
            <Num $under="single" $pr={2}>100%</Num>
            <Num $under="double">2.630.602.283</Num>
            <Num $under="single" $pr={3}>100%</Num>
          </DocRow>
          <Heading $h={24}>P A S I V O</Heading>
          <DocRow $bold>
            <div>PASIVO CORRIENTE</div>
          </DocRow>
          <DocRow>
            <div>Cuenta y Documentos por Pagar</div>
            <NoteCell>1.2.6 y 2.4</NoteCell>
            <Num>374.513.723</Num>
            <Num />
            <Num>146.602.619</Num>
          </DocRow>
        </Page>
        <DocScroll>
          <DocUp size={13} strokeWidth={3} />
          <DocThumb />
          <DocDown size={13} strokeWidth={3} />
        </DocScroll>
        <SidePane $w={18} $lined>
          <PaneArrow $left />
        </SidePane>
        <ToolStrip>
          <MagnifyDots arrows />
          <StripRule $m="11px 0 0" />
          <StripTool><ExportTool /></StripTool>
          <StripTool><EditLayoutTool /></StripTool>
          <StripTool><CreateTool /></StripTool>
          <StripTool><CommentTool /></StripTool>
          <StripTool><OrganizeTool /></StripTool>
          <StripTool><CompressTool /></StripTool>
          <StripTool><ScanTool /></StripTool>
          <StripTool><SignTool /></StripTool>
          <StripTool><FillTool /></StripTool>
          <StripTool $h={28}><StampTool /></StripTool>
          <StripMore size={18} strokeWidth={2.4} />
          <StripRule $m="4px 0 13px" />
          <CollapseTool />
        </ToolStrip>
      </AcroBody>
    </Acrobat>

    <Explorer>
      <TitleBar>
        <DownArrowIcon />
        <TitleSep />
        <QuickCheckIcon />
        <Gap $w={7} />
        <FolderIcon />
        <Gap $w={6} />
        <QuickCaret />
        <TitleSep $m={6} />
        Downloads
        <WinButtons>
          <WinButton><Minus size={16} strokeWidth={1.2} /></WinButton>
          <WinButton><Square size={11} strokeWidth={1.4} /></WinButton>
          <WinButton><X size={17} strokeWidth={1.2} /></WinButton>
        </WinButtons>
      </TitleBar>
      <TabRow>
        <FileTab>File</FileTab>
        <RibbonTab $w={57} $active>Home</RibbonTab>
        <RibbonTab $w={59}>Share</RibbonTab>
        <RibbonTab $w={54}>View</RibbonTab>
        <TabEnd>
          <ChevronUp size={15} strokeWidth={1.6} />
          <HelpDot>?</HelpDot>
        </TabEnd>
      </TabRow>
      <Ribbon>
        <Group $w={263}>
          <GroupBody $pl={4}>
            <LargeButton $w={70} $off>
              <PinIcon />
              Pin to Quick access
            </LargeButton>
            <LargeButton $w={38}>
              <CopyLarge />
              Copy
            </LargeButton>
            <LargeButton $w={48} $off>
              <PasteLarge />
              Paste
            </LargeButton>
            <SmallStack>
              <SmallButton $gap={2}><CutIcon />Cut</SmallButton>
              <SmallButton $gap={2}><CopyPathIcon />Copy path</SmallButton>
              <SmallButton $gap={2} $off><ShortcutIcon />Paste shortcut</SmallButton>
            </SmallStack>
          </GroupBody>
          <GroupLabel>Clipboard</GroupLabel>
        </Group>
        <Group $w={165}>
          <GroupBody $pl={8}>
            <TallStack $w={77} $lined>
              <SmallButton $h={29} $gap={2}><MoveToIcon />Move to<Caret /></SmallButton>
              <SmallButton $h={29} $gap={2}><CopyToIcon />Copy to<Caret /></SmallButton>
            </TallStack>
            <TallStack>
              <SmallButton $h={29} $gap={2}><DeleteIcon />Delete<Caret /></SmallButton>
              <SmallButton $h={29} $gap={2}><RenameIcon />Rename</SmallButton>
            </TallStack>
          </GroupBody>
          <GroupLabel>Organize</GroupLabel>
        </Group>
        <Group $w={83}>
          <GroupBody>
            <LargeButton $w={50}>
              <NewFolderLarge />
              New folder
            </LargeButton>
            <SmallStack>
              <SmallButton><NewItemIcon /><Caret $m={-3} /></SmallButton>
              <SmallButton><EasyAccessIcon /><Caret $m={-3} /></SmallButton>
            </SmallStack>
          </GroupBody>
          <GroupLabel>New</GroupLabel>
        </Group>
        <Group $w={132}>
          <GroupBody>
            <LargeButton $w={63}>
              <PropertiesLarge />
              Properties
              <Caret $m={0} $mt={5} />
            </LargeButton>
            <SmallStack>
              <SmallButton><AcroTile />Open<Caret /></SmallButton>
              <SmallButton $off><IconSlot><EditIcon /></IconSlot>Edit</SmallButton>
              <SmallButton><HistoryIcon />History</SmallButton>
            </SmallStack>
          </GroupBody>
          <GroupLabel>Open</GroupLabel>
        </Group>
        <Group $w={115}>
          <GroupBody $pl={8}>
            <SmallStack>
              <SmallButton><SelectTile cells={[1, 1, 1, 1]} />Select all</SmallButton>
              <SmallButton><SelectTile cells={[0, 0, 0, 0]} />Select none</SmallButton>
              <SmallButton><SelectTile cells={[0, 1, 1, 0]} />Invert selection</SmallButton>
            </SmallStack>
          </GroupBody>
          <GroupLabel>Select</GroupLabel>
        </Group>
      </Ribbon>
      <AddressRow>
        <NavButton $w={24} $mr={5}><ArrowLeft size={16} /></NavButton>
        <NavButton $w={24} $mr={6}><ArrowRight size={16} /></NavButton>
        <NavButton $w={12} $mr={3}><ChevronDown size={11} /></NavButton>
        <NavButton $w={24} $mr={1}><ArrowUp size={16} /></NavButton>
        <AddressBox>
          <DownArrowIcon />
          <CrumbArrow size={11} $l={3} $r={6} />
          <span>This PC</span>
          <CrumbArrow size={11} $l={5} $r={5} />
          <span>Downloads</span>
          <AddressEnd>
            <ChevronDown size={13} />
            <RotateCw size={12} />
          </AddressEnd>
        </AddressBox>
        <SearchBox>
          Search Downloads
          <Search size={13} color="#444" />
        </SearchBox>
      </AddressRow>
      <MainArea>
        <NavPane>
          {navItems.map((n, i) => (
            <NavRow key={i} $pl={n.pl} $active={n.active}>
              {n.icon}
              {n.label}
            </NavRow>
          ))}
        </NavPane>
        <ScrollBar $top={4} $bottom={4}>
          <ChevronUp size={13} strokeWidth={3} />
          <ScrollThumb $top={157} $h={108} />
          <ChevronDown size={13} strokeWidth={3} />
        </ScrollBar>
        <FilePane>
          <FileList>
            <ColumnHeader>
              <ColumnCell $first $pl={3}>Name</ColumnCell>
              <ColumnCell>Date modified</ColumnCell>
              <ColumnCell $pl={6}>Type</ColumnCell>
              <ColumnCell $pl={6}>Size</ColumnCell>
            </ColumnHeader>
            <GroupHead>
              <ChevronDown size={14} strokeWidth={1.4} />
              Today (11)
            </GroupHead>
            {todayFiles.map((f) => (
              <FileLine key={f.name} {...f} />
            ))}
            <GroupHead $mt={4}>
              <ChevronDown size={14} strokeWidth={1.4} />
              Earlier this month (1)
            </GroupHead>
            <FileLine icon={<FolderIcon />} name="Ingresos" date="4/7/2025 8:00 PM" type="File folder" size="" />
            <GroupHead $mt={4}>
              <ChevronDown size={14} strokeWidth={1.4} />
              A long time ago (7)
            </GroupHead>
          </FileList>
          <ScrollBar $top={2} $bottom={1}>
            <ChevronUp size={13} strokeWidth={3} />
            <ScrollThumb $top={17} $h={225} />
            <ChevronDown size={13} strokeWidth={3} />
          </ScrollBar>
          <HScroll>
            <ChevronLeft size={13} strokeWidth={3} />
            <HThumb />
            <ChevronRight size={13} strokeWidth={3} />
          </HScroll>
        </FilePane>
      </MainArea>
      <StatusBar>
        <StatusItem $mr={21}>19 items</StatusItem>
        <StatusItem $mr={5}>1 item selected</StatusItem>
        <span>45.6 KB</span>
        <ViewButtons>
          <ViewButton $on><DetailsView /></ViewButton>
          <ViewButton><ThumbView /></ViewButton>
        </ViewButtons>
      </StatusBar>
    </Explorer>

    <Watermark>
      <MarkText>ANY</MarkText>
      <PlayMark />
      <MarkText>RUN</MarkText>
    </Watermark>

    <Taskbar>
      <StartButton><WinLogo /></StartButton>
      <SearchField>
        <TaskSearchIcon />
        Type here to search
      </SearchField>
      <TaskButton><TaskViewIcon /></TaskButton>
      <Gap $w={2} />
      <TaskButton $open><EdgeIcon s={24} /></TaskButton>
      <TaskButton $open $active><ExplorerTaskIcon /></TaskButton>
      <TaskButton><FirefoxIcon /></TaskButton>
      <TaskButton $open><OutlookIcon /></TaskButton>
      <TaskButton $open><ExcelTaskIcon /></TaskButton>
      <TaskButton $open><AcroTaskIcon /></TaskButton>
      <Tray>
        <TrayIcon><ChevronUp size={18} strokeWidth={1.3} /></TrayIcon>
        <TrayIcon><MeetIcon /></TrayIcon>
        <TrayIcon><NetworkIcon /></TrayIcon>
        <TrayIcon><SpeakerIcon /></TrayIcon>
        <Clock>
          3:06 AM
          <br />
          4/25/2025
        </Clock>
        <TrayIcon><NotifyIcon /></TrayIcon>
      </Tray>
    </Taskbar>
  </Screen>
);

export default App;
